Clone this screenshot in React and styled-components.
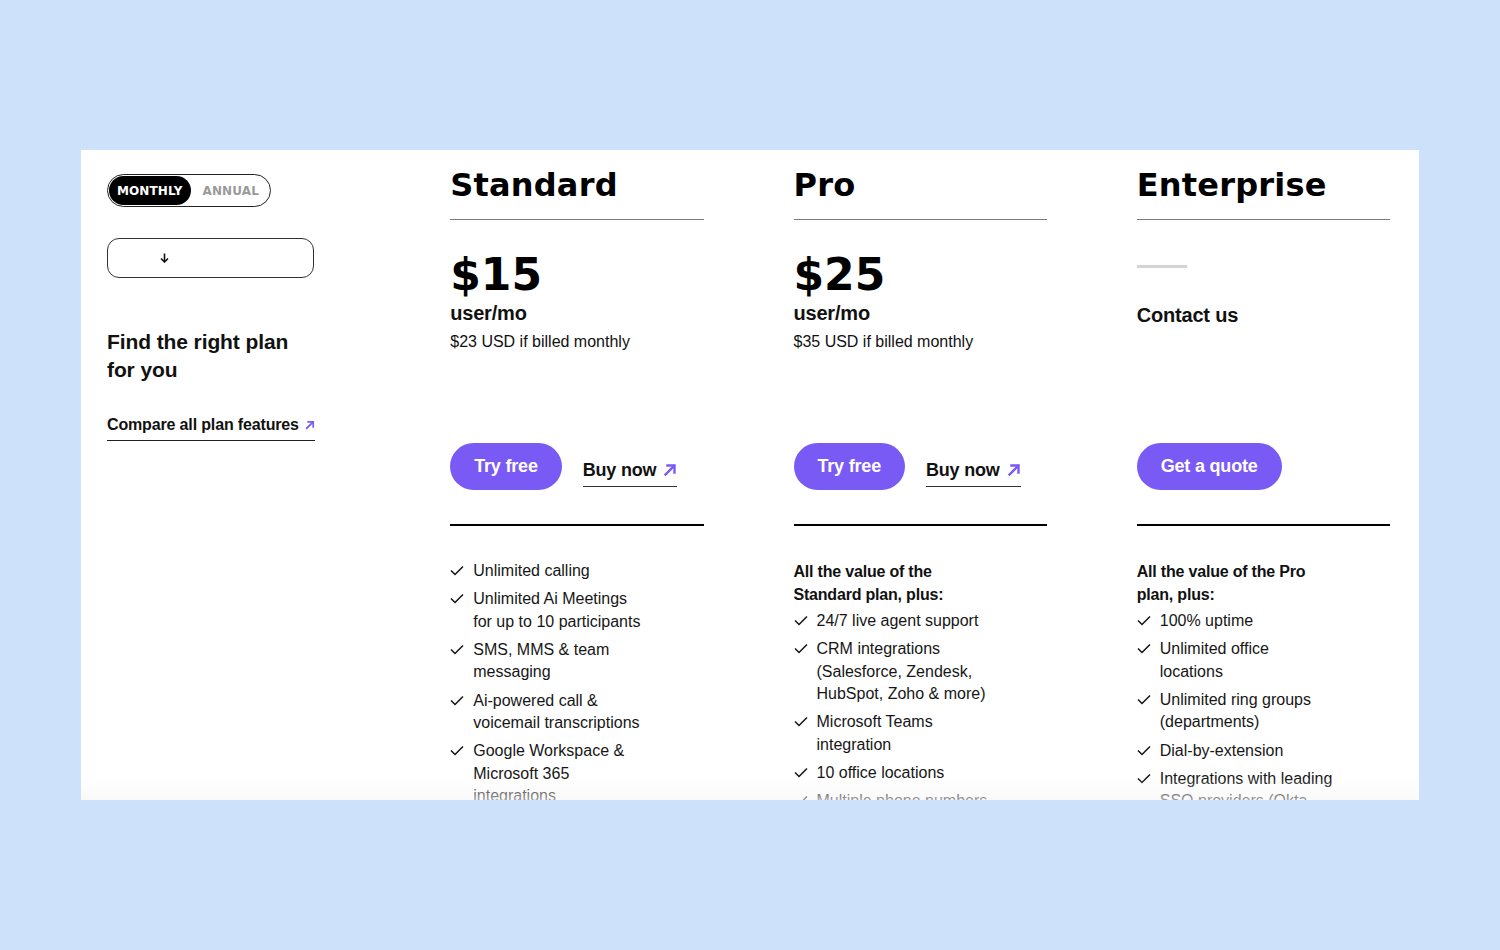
import styled, { createGlobalStyle } from "styled-components";

const GlobalStyle = createGlobalStyle`
    html, body {
        margin: 0;
        padding: 0;
        background-color: #cde1fb;
    }
    body {
        font-family: "Liberation Sans", Arial, sans-serif;
        color: #111;
        -webkit-font-smoothing: antialiased;
    }
`

const Painel = styled.section`
    position: relative;
    box-sizing: border-box;
    width: 1338px;
    height: 650px;
    margin: 150px auto 0;
    padding: 0 29px 0 26px;
    background-color: #fff;
    overflow: hidden;
    display: grid;
    grid-template-columns: repeat(4, 1fr);
    column-gap: 90px;
    align-items: start;

    &::after {
        content: "";
        position: absolute;
        left: 0;
        right: 0;
        bottom: 0;
        height: 22px;
        background: linear-gradient(to bottom, rgba(255, 255, 255, 0), rgba(246, 246, 246, 0.6));
        pointer-events: none;
    }
`

const ColunaLateral = styled.div`
    padding-top: 24px;
    display: flex;
    flex-direction: column;
    align-items: flex-start;
`

const Alternador = styled.div`
    box-sizing: border-box;
    display: flex;
    align-items: center;
    width: 164px;
    height: 33px;
    padding: 0 1px;
    border: 1px solid #222;
    border-radius: 17px;
`

const OpcaoPeriodo = styled.span`
    box-sizing: border-box;
    display: flex;
    align-items: center;
    justify-content: center;
    height: 29px;
    padding: 0 ${({ $ativo }) => ($ativo ? "8px" : "12px")};
    border-radius: 15px;
    background-color: ${({ $ativo }) => ($ativo ? "#000" : "transparent")};
    color: ${({ $ativo }) => ($ativo ? "#fff" : "#9a9a9a")};
    font-family: "DejaVu Sans", sans-serif;
    font-weight: 700;
    font-size: 12px;
    letter-spacing: 0.1px;
    text-transform: uppercase;
`

const Seletor = styled.button`
    box-sizing: border-box;
    display: flex;
    align-items: center;
    width: 207px;
    height: 40px;
    margin-top: 31px;
    padding: 0 0 0 52px;
    border: 1px solid #333;
    border-radius: 12px;
    background: #fff;
    cursor: pointer;
`

const TituloLateral = styled.h2`
    margin: 50px 0 0;
    font-size: 21px;
    line-height: 28px;
    font-weight: 700;
    color: #111;
    letter-spacing: -0.1px;
`

const LinkComparar = styled.a`
    display: flex;
    align-items: center;
    gap: 6px;
    margin-top: 31px;
    padding-bottom: 5px;
    border-bottom: 1.5px solid #222;
    font-size: 16px;
    line-height: 20px;
    font-weight: 700;
    color: #111;
    text-decoration: none;
    letter-spacing: -0.15px;
`

const ColunaPlano = styled.div`
    display: flex;
    flex-direction: column;
`

const NomePlano = styled.h3`
    margin: 0;
    padding: 15px 0 14px;
    border-bottom: 1px solid #7a7a7a;
    font-family: "DejaVu Sans", sans-serif;
    font-size: 32px;
    line-height: 40px;
    font-weight: 700;
    color: #000;
    letter-spacing: 0.2px;
`

const BlocoPreco = styled.div`
    box-sizing: border-box;
    height: 223px;
    padding-top: ${({ $contato }) => ($contato ? "45px" : "31px")};
    display: flex;
    flex-direction: column;
    align-items: flex-start;
`

const Valor = styled.div`
    font-family: "DejaVu Sans", sans-serif;
    font-size: 44px;
    line-height: 48px;
    font-weight: 700;
    color: #000;
`

const Unidade = styled.div`
    margin-top: 2px;
    font-size: 20px;
    line-height: 24px;
    font-weight: 700;
    color: #111;
    letter-spacing: -0.2px;
`

const Observacao = styled.div`
    margin-top: 6px;
    font-size: 16px;
    line-height: 22px;
    color: #111;
`

const TracoCinza = styled.span`
    display: block;
    width: 50px;
    height: 3px;
    background-color: #d4d4d4;
`

const Contato = styled.div`
    margin-top: 35px;
    font-size: 20px;
    line-height: 24px;
    font-weight: 700;
    color: #111;
    letter-spacing: -0.2px;
`

const LinhaAcoes = styled.div`
    display: flex;
    align-items: flex-start;
    gap: 21px;
    height: 47px;
    margin-bottom: 34px;
`

const BotaoRoxo = styled.button`
    box-sizing: border-box;
    height: 47px;
    padding: 0 24px;
    border: none;
    border-radius: 24px;
    background-color: #7a5af5;
    color: #fff;
    font-family: "Liberation Sans", Arial, sans-serif;
    font-size: 18px;
    font-weight: 700;
    letter-spacing: -0.2px;
    cursor: pointer;
`

const LinkComprar = styled.a`
    display: flex;
    align-items: center;
    gap: 7px;
    margin-top: 16px;
    padding-bottom: 5px;
    border-bottom: 1.5px solid #333;
    font-size: 18px;
    line-height: 22px;
    font-weight: 700;
    color: #111;
    text-decoration: none;
    letter-spacing: -0.2px;
`

const Recursos = styled.div`
    border-top: 2px solid #000;
    padding-top: 34px;
`

const CabecalhoRecursos = styled.p`
    width: 200px;
    margin: 0 0 4px;
    font-size: 16px;
    line-height: 23px;
    font-weight: 700;
    color: #111;
    letter-spacing: -0.2px;
`

const Lista = styled.ul`
    list-style: none;
    margin: 0;
    padding: 0;
    display: flex;
    flex-direction: column;
    gap: 5.7px;
`

const Item = styled.li`
    display: flex;
    align-items: flex-start;
    gap: 9px;
    font-size: 16px;
    line-height: 22.5px;
    color: #161616;

    span {
        width: 174px;
    }
`

function SetaDiagonal({ tamanho = 14 }) {
    return (
        <svg width={tamanho} height={tamanho} viewBox="0 0 14 14" fill="none">
            <path d="M2.5 11.5 L11 3" stroke="#7a5af5" strokeWidth="2.4" strokeLinecap="square" />
            <path d="M4.5 2.5 H11.5 V9.5" stroke="#7a5af5" strokeWidth="2.4" strokeLinecap="square" />
        </svg>
    )
}

function SetaBaixo() {
    return (
        <svg width="9" height="10" viewBox="0 0 9 10" fill="none">
            <path d="M4.5 0.5 V8.5" stroke="#111" strokeWidth="1.6" />
            <path d="M1 5.5 L4.5 9 L8 5.5" stroke="#111" strokeWidth="1.6" />
        </svg>
    )
}

function Visto() {
    return (
        <svg width="14" height="22" viewBox="0 0 14 22" fill="none" style={{ flexShrink: 0 }}>
            <path d="M1 10.5 L5 14.5 L13 6.5" stroke="#111" strokeWidth="1.5" />
        </svg>
    )
}

const planos = [
    {
        nome: "Standard",
        valor: "$15",
        mensal: "$23 USD if billed monthly",
        recursos: [
            "Unlimited calling",
            "Unlimited Ai Meetings for up to 10 participants",
            "SMS, MMS & team messaging",
            "Ai-powered call & voicemail transcriptions",
            "Google Workspace & Microsoft 365 integrations",
            "Ai-powered spam detection",
        ],
    },
    {
        nome: "Pro",
        valor: "$25",
        mensal: "$35 USD if billed monthly",
        cabecalho: "All the value of the Standard plan, plus:",
        recursos: [
            "24/7 live agent support",
            "CRM integrations (Salesforce, Zendesk, HubSpot, Zoho & more)",
            "Microsoft Teams integration",
            "10 office locations",
            "Multiple phone numbers",
        ],
    },
    {
        nome: "Enterprise",
        contato: true,
        cabecalho: "All the value of the Pro plan, plus:",
        recursos: [
            "100% uptime",
            "Unlimited office locations",
            "Unlimited ring groups (departments)",
            "Dial-by-extension",
            "Integrations with leading SSO providers (Okta, Azure & more)",
        ],
    },
]

function Plano({ plano }) {
    return (
        <ColunaPlano>
            <NomePlano>{plano.nome}</NomePlano>
            {plano.contato ? (
                <BlocoPreco $contato>
                    <TracoCinza />
                    <Contato>Contact us</Contato>
                </BlocoPreco>
            ) : (
                <BlocoPreco>
                    <Valor>{plano.valor}</Valor>
                    <Unidade>user/mo</Unidade>
                    <Observacao>{plano.mensal}</Observacao>
                </BlocoPreco>
            )}
            <LinhaAcoes>
                {plano.contato ? (
                    <BotaoRoxo>Get a quote</BotaoRoxo>
                ) : (
                    <>
                        <BotaoRoxo>Try free</BotaoRoxo>
                        <LinkComprar href="#">
                            Buy now <SetaDiagonal />
                        </LinkComprar>
                    </>
                )}
            </LinhaAcoes>
            <Recursos>
                {plano.cabecalho && <CabecalhoRecursos>{plano.cabecalho}</CabecalhoRecursos>}
                <Lista>
                    {plano.recursos.map((r) => (
                        <Item key={r}>
                            <Visto />
                            <span>{r}</span>
                        </Item>
                    ))}
                </Lista>
            </Recursos>
        </ColunaPlano>
    )
}

export default function App() {
    return (
        <>
            <GlobalStyle />
            <Painel>
                <ColunaLateral>
                    <Alternador>
                        <OpcaoPeriodo $ativo>Monthly</OpcaoPeriodo>
                        <OpcaoPeriodo>Annual</OpcaoPeriodo>
                    </Alternador>
                    <Seletor aria-label="Selecionar moeda">
                        <SetaBaixo />
                    </Seletor>
                    <TituloLateral>
                        Find the right plan
                        <br />
                        for you
                    </TituloLateral>
                    <LinkComparar href="#">
                        Compare all plan features <SetaDiagonal tamanho={10} />
                    </LinkComparar>
                </ColunaLateral>
                {planos.map((p) => (
                    <Plano key={p.nome} plano={p} />
                ))}
            </Painel>
        </>
    )
}
